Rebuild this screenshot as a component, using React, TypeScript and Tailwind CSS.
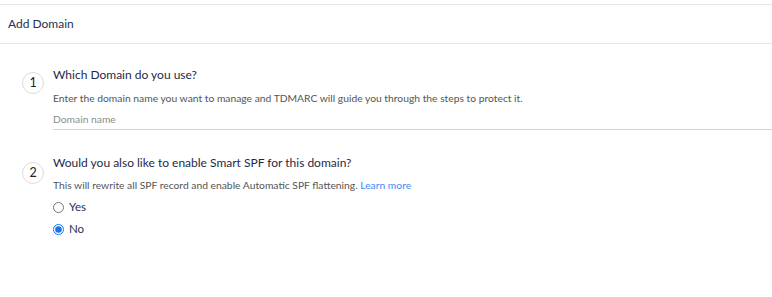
import React, { useState } from 'react';

function StepBadge({ n, className = '' }: { n: number; className?: string }) {
  return (
    <div
      className={`w-[22px] h-[22px] flex-shrink-0 rounded-full border border-[#dcdcdc] flex items-center justify-center text-[12.5px] text-[#222] ${className}`}
    >
      {n}
    </div>
  );
}

export default function App() {
  const [smartSpf, setSmartSpf] = useState<'yes' | 'no'>('no');
  const [domain, setDomain] = useState('');

  return (
    <div className="w-[772px] h-[297px] bg-white pt-[4px] font-['Lato',sans-serif] text-[#2a3350]">
      {/* Header */}
      <div className="h-[40px] border-t border-b border-[#e3e4ea] flex items-center px-[8px] text-[12px] text-[#283152]">
        Add Domain
      </div>

      {/* Step 1 */}
      <div className="flex gap-[9px] pl-[22px] pt-[21px]">
        <StepBadge n={1} className="mt-[7px]" />
        <div className="flex-1 min-w-0">
          <div className="text-[12px] leading-[20px] text-[#1f2947]">Which Domain do you use?</div>
          <div className="mt-[5px] text-[10.3px] leading-[16px] text-[#555]">
            Enter the domain name you want to manage and TDMARC will guide you through the steps to protect it.
          </div>
          <input
            value={domain}
            onChange={(e) => setDomain(e.target.value)}
            placeholder="Domain name"
            className="block w-full h-[24px] pt-[3px] border-b border-[#cfd4dd] bg-transparent text-[10.3px] text-[#333] placeholder-[#8c8c8c] outline-none"
          />
        </div>
      </div>

      {/* Step 2 */}
      <div className="flex gap-[9px] pl-[22px] pt-[23px]">
        <StepBadge n={2} className="mt-[9px]" />
        <div className="flex-1 min-w-0">
          <div className="text-[12px] leading-[20px] text-[#1f2947]">
            Would you also like to enable Smart SPF for this domain?
          </div>
          <div className="mt-[4px] text-[10.3px] leading-[16px] text-[#555]">
            This will rewrite all SPF record and enable Automatic SPF flattening.{' '}
            <a className="text-[#3d8af7] cursor-pointer">Learn more</a>
          </div>
          <div className="mt-[6px] flex flex-col gap-[6px]">
            {(['yes', 'no'] as const).map((v) => (
              <label key={v} className="flex items-center gap-[5px] h-[16px] text-[11.5px] text-[#283152] cursor-pointer">
                <input
                  type="radio"
                  name="smartspf"
                  checked={smartSpf === v}
                  onChange={() => setSmartSpf(v)}
                  className="w-[11px] h-[11px] m-0 accent-[#1a73e8]"
                />
                {v === 'yes' ? 'Yes' : 'No'}
              </label>
            ))}
          </div>
        </div>
      </div>
    </div>
  );
}
